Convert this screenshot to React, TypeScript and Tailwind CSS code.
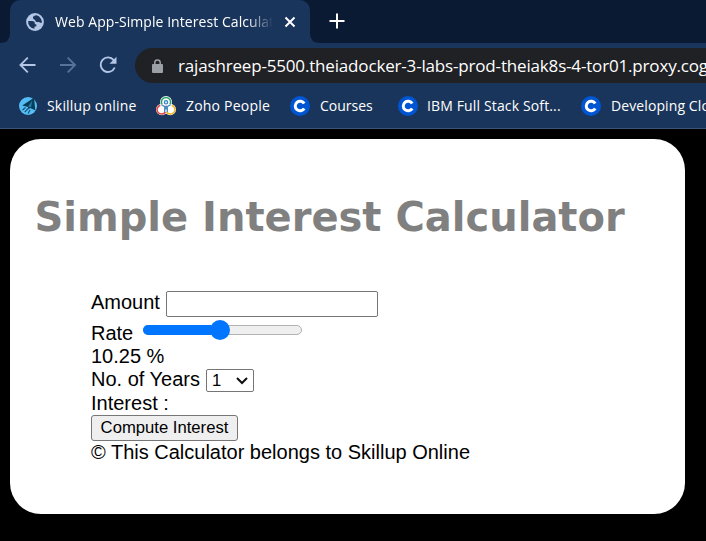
import type { ReactNode } from "react";

function Globe() {
  return (
    <svg width="18" height="18" viewBox="0 0 18 18" className="shrink-0">
      <circle cx="9" cy="9" r="8.9" fill="#b4c6e6" />
      <path
        d="M2.200 8H6c1.700 0 2.800.9 2.800 2.300v.9h1.500v2.200H8.500v2.400A6.900 6.900 0 0 1 2.200 8ZM10.600 2.300c-2 .1-3.700.9-3.700 2.400 0 1.700 2.100 1.200 2.400 2.800.2 1.500 1.700 2 3.100 1.600 1.100-.3 1.600.9 3.300.8A6.900 6.900 0 0 0 10.600 2.300Z"
        fill="#1a355b"
      />
    </svg>
  );
}

function SkillupLogo() {
  return (
    <svg width="18" height="18" viewBox="0 0 18 18" className="shrink-0">
      <circle cx="9" cy="9" r="9" fill="#55bdf5" />
      <path d="M15 .8 16.300 13.200 11 11 9.500 12.500 9 9.900 3.200 8.500Z" fill="#073d58" />
      <path d="m13.300 3.300-4.300 6.300 3 .8Z" fill="#287ba0" />
      <path d="m3.500 13 3-2.500M5.700 15.200l3.500-3.900M9 16.500l2-3.500" stroke="#174f70" strokeWidth="1.200" fill="none" />
    </svg>
  );
}

function ZohoLogo() {
  return (
    <svg width="20" height="20" viewBox="0 0 20 20" className="shrink-0">
      <g fill="#fff">
        <circle cx="10" cy="6" r="6" />
        <circle cx="5.800" cy="13.500" r="5.800" />
        <circle cx="14.200" cy="13.500" r="5.800" />
      </g>
      <g fill="none" strokeWidth="1.500">
        <path d="M6 8.300A4.600 4.600 0 1 1 14 8.300" stroke="#25a566" />
        <path d="M4.300 9.300A4.500 4.500 0 1 0 9.400 16" stroke="#e43d3d" />
        <path d="M15.700 9.300A4.500 4.500 0 1 1 10.600 16" stroke="#edb51c" />
      </g>
      <circle cx="10" cy="6.300" r="1.700" fill="#d7edff" stroke="#3d82ca" strokeWidth="1.200" />
      <path d="m5.500 8.700 3.100 1.800h2.800l3.100-1.800M8.700 10.500v5.800M11.300 10.500v5.800M10 10v3.500" stroke="#4b88bd" strokeWidth="1.300" fill="none" />
    </svg>
  );
}

function CourseraLogo() {
  return (
    <svg width="20" height="20" viewBox="0 0 20 20" className="shrink-0">
      <circle cx="10" cy="10" r="10" fill="#0056d2" />
      <path d="M14.200 7.600A4.800 4.800 0 1 0 14.200 12.400" fill="none" stroke="#fff" strokeWidth="3" />
    </svg>
  );
}

function Bookmark({ className, children }: { className: string; children: ReactNode }) {
  return <div className={`flex h-5 shrink-0 items-center whitespace-nowrap ${className}`}>{children}</div>;
}

function Browser() {
  return (
    <header className="h-[129px] overflow-hidden border-b border-[#3b5579] bg-[#1a355b] font-['Open_Sans',sans-serif] text-white">
      <div className="flex h-[43px] bg-[#0a1a32]">
        <svg width="10" height="43" className="shrink-0"><path d="M10 33v10H0q10 0 10-10" fill="#1a355b" /></svg>
        <div className="flex w-[300px] items-center rounded-t-[10px] bg-[#1a355b] pl-4 pr-[14px]">
          <Globe />
          <span className="ml-[11px] w-[218px] overflow-hidden whitespace-nowrap pb-px text-[14px] tracking-[0.06px] [mask-image:linear-gradient(to_right,black_88%,transparent)]">
            Web App-Simple Interest Calculat
          </span>
          <svg width="12" height="12" viewBox="0 0 12 12" className="ml-auto shrink-0"><path d="m1.500 1.500 9 9m0-9-9 9" stroke="white" strokeWidth="2" /></svg>
        </div>
        <svg width="10" height="43" className="shrink-0"><path d="M0 33v10h10Q0 43 0 33" fill="#1a355b" /></svg>
        <svg width="16" height="16" viewBox="0 0 16 16" className="ml-[9px] mt-[13px] shrink-0"><path d="M8 .5v15M.5 8h15" stroke="white" strokeWidth="2" /></svg>
      </div>
      <div className="flex h-[45px] items-center">
        <svg width="18" height="18" viewBox="0 0 18 18" className="mb-[2px] ml-[19px] shrink-0"><path d="M16.500 9h-15M8.800 1.600 1.400 9l7.400 7.400" stroke="#b4c6e6" strokeWidth="1.800" fill="none" /></svg>
        <svg width="18" height="18" viewBox="0 0 18 18" className="mb-[2px] ml-[22px] shrink-0"><path d="M1 9h15M8.700 1.600 16.100 9l-7.400 7.400" stroke="#58729a" strokeWidth="1.800" fill="none" /></svg>
        <svg width="18" height="18" viewBox="0 0 18 18" className="mb-[2px] ml-[22px] shrink-0"><path d="M14.700 4.200A7.300 7.300 0 1 0 15.700 11.500" stroke="#b4c6e6" strokeWidth="1.900" fill="none" /><path d="M17.500.7v7h-7Z" fill="#b4c6e6" /></svg>
        <div className="ml-[18px] flex h-[35px] w-[600px] shrink-0 items-center rounded-l-full bg-[#202124] pl-[17px]">
          <svg width="11" height="14" viewBox="0 0 11 14" className="shrink-0"><path d="M2.800 6V3.600a2.700 2.700 0 0 1 5.400 0V6" stroke="#9aa0a6" strokeWidth="1.500" fill="none" /><rect y="5" width="11" height="9" rx="1" fill="#9aa0a6" /></svg>
          <span className="ml-[15px] whitespace-nowrap text-[17px] tracking-[-0.17px]">rajashreep-5500.theiadocker-3-labs-prod-theiak8s-4-tor01.proxy.cog</span>
        </div>
      </div>
      <nav className="flex h-9 items-center pl-[19px] text-[14px]">
        <Bookmark className="w-[137px]"><SkillupLogo /><span className="mb-[2px] ml-[10px] tracking-[0.18px]">Skillup online</span></Bookmark>
        <Bookmark className="w-[134px]"><ZohoLogo /><span className="mb-[2px] ml-[10px] tracking-[0.2px]">Zoho People</span></Bookmark>
        <Bookmark className="w-[108px]"><CourseraLogo /><span className="mb-[2px] ml-[10px]">Courses</span></Bookmark>
        <Bookmark className="w-[183px]"><CourseraLogo /><span className="mb-[2px] ml-[9px] tracking-[0.14px]">IBM Full Stack Soft...</span></Bookmark>
        <Bookmark className="w-[200px]"><CourseraLogo /><span className="mb-[2px] ml-[10px] tracking-[0.1px]">Developing Clo</span></Bookmark>
      </nav>
    </header>
  );
}

export default function App() {
  return (
    <div className="h-[541px] w-[706px] overflow-hidden bg-black">
      <Browser />
      <main className="ml-[10px] mt-[10px] h-[375px] w-[675px] rounded-[31px] bg-white pt-[53px] font-['Liberation_Sans',Arial,sans-serif] text-[20px] leading-[23px] text-black">
        <h1 className="ml-[24.5px] h-[99px] whitespace-nowrap font-['DejaVu_Sans',sans-serif] text-[40px] font-bold leading-[50px] text-[#808080]">Simple Interest Calculator</h1>
        <div className="ml-[81px]">
          <div className="flex h-[30px]">
            <label htmlFor="amount">Amount</label>
            <input id="amount" className="ml-[6px] h-[26px] w-[212px] rounded-[2px] border border-[#767676] px-1 outline-none" />
          </div>
          <div className="flex h-6">
            <span className="w-[52px] pt-px">Rate</span>
            <div className="mt-[-1px] flex h-5 w-[159px] items-center">
              <div className="flex h-[10px] w-full items-center rounded-full border border-[#b2b2b2] bg-[#efefef]">
                <div className="-ml-px h-[10px] w-[68px] shrink-0 rounded-l-full bg-[#0075ff]" />
                <div className="-ml-px h-5 w-5 shrink-0 rounded-full bg-[#0075ff]" />
              </div>
            </div>
          </div>
          <div className="h-[23px]">10.25 %</div>
          <div className="flex h-6">
            <span>No. of Years</span>
            <div className="ml-[6px] mt-[1px] flex h-[23px] w-[48px] items-center rounded-[2px] border border-[#767676] pl-[5px] text-[16.67px]">
              1
              <svg width="12" height="8" viewBox="0 0 12 8" className="ml-[15px]"><path d="m1 1 5 5 5-5" fill="none" stroke="#101010" strokeWidth="2" /></svg>
            </div>
          </div>
          <div className="h-[23px]">Interest :</div>
          <button className="block h-[26px] w-[147px] whitespace-nowrap rounded-[3px] border border-[#767676] bg-[#efefef] text-[16.67px] leading-[22px]">Compute Interest</button>
          <div className="whitespace-nowrap">© This Calculator belongs to Skillup Online</div>
        </div>
      </main>
    </div>
  );
}
